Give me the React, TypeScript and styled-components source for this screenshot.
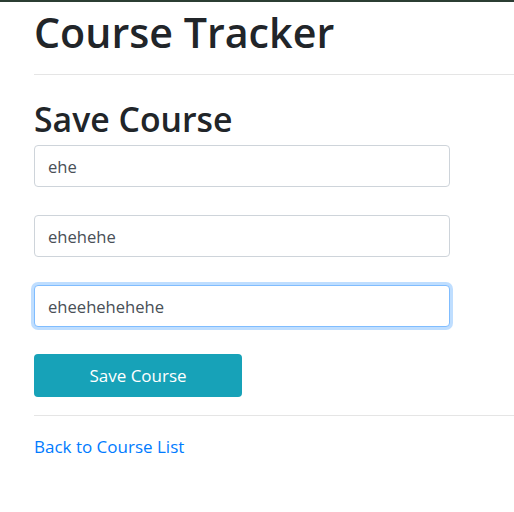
import React from "react";
import styled, { createGlobalStyle } from "styled-components";

const Global = createGlobalStyle`
  html, body { margin: 0; padding: 0; background: #fff; }
  body {
    font-family: "Open Sans", "Noto Sans", sans-serif;
    color: #212529;
    overflow: hidden;
  }
`;

const TopBar = styled.div`
  height: 2px;
  background: #2b3d33;
`;

const Container = styled.div`
  padding-left: 34px;
`;

const Title = styled.h1`
  margin: 0;
  font-size: 41.2px;
  font-weight: 600;
  line-height: 60px;
  letter-spacing: 0;
`;

const Rule = styled.hr`
  margin: 12px 0 0 0;
  border: 0;
  border-top: 1px solid #e5e5e5;
`;

const SubTitle = styled.h2`
  margin: 20px 0 0 0;
  font-size: 33.8px;
  font-weight: 600;
  line-height: 48px;
  letter-spacing: 0;
`;

const Form = styled.form`
  display: flex;
  flex-direction: column;
  gap: 28px;
  margin-top: 2px;
`;

const Input = styled.input<{ $focused?: boolean }>`
  box-sizing: border-box;
  width: 416px;
  height: 42px;
  padding: 0 13px;
  font-family: inherit;
  font-size: 16.6px;
  color: #495057;
  background: #fff;
  border: 1px solid ${(p) => (p.$focused ? "#80bdff" : "#ced4da")};
  border-radius: 4px;
  outline: none;
  box-shadow: ${(p) => (p.$focused ? "0 0 0 3px rgba(0,123,255,0.25)" : "none")};
`;

const Button = styled.button`
  box-sizing: border-box;
  width: 208px;
  height: 43px;
  margin-top: -1px;
  border: 0;
  border-radius: 4px;
  background: #17a2b8;
  color: #fff;
  font-family: inherit;
  font-size: 17px;
  cursor: pointer;
`;

const Rule2 = styled.hr`
  margin: 18px 0 0 0;
  border: 0;
  border-top: 1px solid #e5e5e5;
`;

const BackLink = styled.a`
  display: inline-block;
  margin-top: 19px;
  color: #007bff;
  font-size: 17px;
  text-decoration: none;
`;

export default function App() {
  return (
    <>
      <Global />
      <TopBar />
      <Container>
        <Title>Course Tracker</Title>
        <Rule />
        <SubTitle>Save Course</SubTitle>
        <Form onSubmit={(e) => e.preventDefault()}>
          <Input defaultValue="ehe" />
          <Input defaultValue="ehehehe" />
          <Input defaultValue="eheehehehehe" $focused />
          <Button type="submit">Save Course</Button>
        </Form>
        <Rule2 />
        <BackLink href="#">Back to Course List</BackLink>
      </Container>
    </>
  );
}
